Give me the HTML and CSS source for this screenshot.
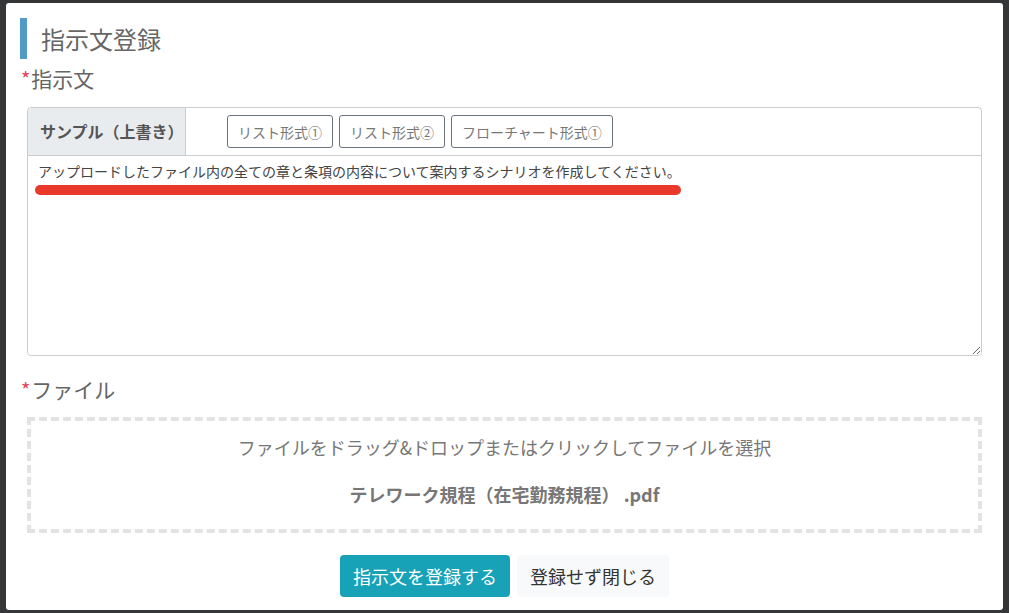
FILE: index.html
```html
<!DOCTYPE html>
<html lang="ja">
<head>
    <meta charset="UTF-8">
    <title>指示文登録</title>
    <link rel="stylesheet" href="styles.css">
</head>
<body>
    <!-- モーダル -->
    <div class="modal">
        <div class="modal-title">指示文登録</div>

        <div class="field-label"><span class="req">*</span>指示文</div>
        <div class="prompt-box">
            <div class="prompt-head">
                <div class="sample-cell">サンプル（上書き）</div>
                <div class="sample-buttons">
                    <button class="btn-outline">リスト形式①</button>
                    <button class="btn-outline">リスト形式②</button>
                    <button class="btn-outline">フローチャート形式①</button>
                </div>
            </div>
            <div class="prompt-body">
                <textarea class="prompt-text">アップロードしたファイル内の全ての章と条項の内容について案内するシナリオを作成してください。</textarea>
                <!-- 強調の赤線 -->
                <div class="marker"></div>
            </div>
        </div>

        <div class="field-label file-label"><span class="req">*</span>ファイル</div>
        <div class="dropzone">
            <div class="drop-hint">ファイルをドラッグ&amp;ドロップまたはクリックしてファイルを選択</div>
            <div class="drop-file">テレワーク規程（在宅勤務規程） .pdf</div>
        </div>

        <div class="actions">
            <button class="btn-primary">指示文を登録する</button>
            <button class="btn-light">登録せず閉じる</button>
        </div>
    </div>
</body>
</html>
```

FILE: styles.css
```css
/* 全体 */
body {
    margin: 0;
    padding: 3px 6px 3px 6px;
    background-color: #343638;
    font-family: 'Noto Sans CJK JP', 'Noto Sans', sans-serif;
    height: 613px;
    box-sizing: border-box;
}

.modal {
    background-color: #fff;
    border-radius: 3px;
    height: 607px;
    box-sizing: border-box;
    padding: 15px 21px 0 21px;
}

/* タイトル */
.modal-title {
    margin-left: -7px;
    border-left: 7px solid #519bc7;
    padding-left: 14px;
    height: 41px;
    line-height: 41px;
    font-size: 24px;
    color: #666;
}

/* ラベル */
.field-label {
    margin: 5px 0 0 -6px;
    font-size: 21px;
    line-height: 28px;
    color: #666;
}

.field-label .req {
    color: #e2445c;
    font-size: 20px;
    margin-right: 1px;
}

.file-label {
    margin-top: 19px;
}

/* 指示文ボックス */
.prompt-box {
    margin-top: 14px;
    border: 1px solid #ccc;
    border-radius: 4px;
}

.prompt-head {
    display: flex;
    align-items: center;
    height: 47px;
    border-bottom: 1px solid #ccc;
}

.sample-cell {
    width: 145px;
    height: 100%;
    background-color: #e9ecef;
    border-right: 1px solid #ccc;
    border-top-left-radius: 4px;
    padding-left: 12px;
    font-size: 16px;
    font-weight: bold;
    color: #555;
    line-height: 47px;
}

.sample-buttons {
    display: flex;
    gap: 6px;
    padding-left: 41px;
}

.btn-outline {
    height: 33px;
    padding: 0 10px;
    border: 1px solid #6c757d;
    border-radius: 3px;
    background: #fff;
    font-family: inherit;
    font-size: 14px;
    color: #777;
}

.prompt-body {
    position: relative;
}

.prompt-text {
    display: block;
    width: 100%;
    height: 199px;
    box-sizing: border-box;
    border: none;
    border-radius: 0 0 4px 4px;
    padding: 5px 10px;
    font-family: inherit;
    font-size: 14px;
    line-height: 20px;
    color: #444;
    resize: vertical;
    outline: none;
}

.marker {
    position: absolute;
    left: 7px;
    top: 29px;
    width: 646px;
    height: 10px;
    border-radius: 5px;
    background-color: #e8392a;
}

/* ドロップゾーン */
.dropzone {
    margin-top: 13px;
    height: 116px;
    box-sizing: border-box;
    border: 4px dashed #e3e3e3;
    text-align: center;
    color: #777;
    font-size: 18px;
}

.drop-hint {
    margin-top: 13px;
    line-height: 26px;
}

.drop-file {
    margin-top: 21px;
    line-height: 26px;
    font-weight: bold;
}

/* ボタン */
.actions {
    display: flex;
    justify-content: center;
    gap: 7px;
    margin-top: 22px;
}

.btn-primary,
.btn-light {
    height: 42px;
    padding: 0 13px;
    border: none;
    border-radius: 4px;
    font-family: inherit;
    font-size: 18px;
}

.btn-primary {
    background-color: #17a2b8;
    color: #fff;
}

.btn-light {
    background-color: #f8f9fa;
    color: #333;
}
```
